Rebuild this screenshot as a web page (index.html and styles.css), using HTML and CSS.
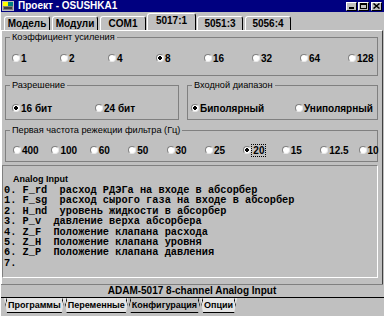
FILE: index.html
```html
<!DOCTYPE html>
<html lang="ru">
<head>
<meta charset="utf-8">
<title>Проект - OSUSHKA1</title>
<link rel="stylesheet" href="styles.css">
</head>
<body>
<div class="window">
  <div class="titlebar">
    <svg class="appicon" width="12" height="10" viewBox="0 0 12 10">
      <rect x="0" y="0" width="12" height="10" fill="#c0c0c0"/>
      <rect x="1" y="1" width="5" height="4" fill="#ffff00"/>
      <rect x="6" y="1" width="5" height="4" fill="#008080"/>
      <rect x="1" y="5" width="10" height="4" fill="#808080"/>
      <path d="M2 7h8" stroke="#000" stroke-width="1"/>
    </svg>
    <span class="title">Проект - OSUSHKA1</span>
    <div class="tbtns">
      <div class="tbtn"><svg width="7" height="6" viewBox="0 0 7 6"><rect x="1" y="4" width="5" height="2" fill="#000"/></svg></div>
      <div class="tbtn"><svg width="7" height="6" viewBox="0 0 7 6"><rect x="0.5" y="0.5" width="6" height="5" fill="none" stroke="#000"/><rect x="0" y="0" width="7" height="2" fill="#000"/></svg></div>
      <div class="tbtn close"><svg width="7" height="6" viewBox="0 0 7 6"><path d="M0.5 0.5L6.5 5.5M6.5 0.5L0.5 5.5" stroke="#000" stroke-width="1.5"/></svg></div>
    </div>
  </div>

  <div class="tabs">
    <div class="tab">Модель</div>
    <div class="tab">Модули</div>
    <div class="tab">COM1</div>
    <div class="tab active">5017:1</div>
    <div class="tab">5051:3</div>
    <div class="tab">5056:4</div>
  </div>

  <div class="panel">
    <fieldset class="group g-gain">
      <legend>Коэффициент усиления</legend>
      <div class="radios gain">
        <label class="radio"><span class="dot"></span>1</label>
        <label class="radio"><span class="dot"></span>2</label>
        <label class="radio"><span class="dot"></span>4</label>
        <label class="radio"><span class="dot on"></span>8</label>
        <label class="radio"><span class="dot"></span>16</label>
        <label class="radio"><span class="dot"></span>32</label>
        <label class="radio"><span class="dot"></span>64</label>
        <label class="radio"><span class="dot"></span>128</label>
      </div>
    </fieldset>

    <div class="pair">
      <fieldset class="group g-res">
        <legend>Разрешение</legend>
        <div class="radios res">
          <label class="radio"><span class="dot on"></span>16 бит</label>
          <label class="radio"><span class="dot"></span>24 бит</label>
        </div>
      </fieldset>
      <fieldset class="group g-range">
        <legend>Входной диапазон</legend>
        <div class="radios range">
          <label class="radio"><span class="dot on"></span>Биполярный</label>
          <label class="radio"><span class="dot"></span>Униполярный</label>
        </div>
      </fieldset>
    </div>

    <fieldset class="group g-freq">
      <legend>Первая частота режекции фильтра (Гц)</legend>
      <div class="radios freq">
        <label class="radio"><span class="dot"></span>400</label>
        <label class="radio"><span class="dot"></span>100</label>
        <label class="radio"><span class="dot"></span>60</label>
        <label class="radio"><span class="dot"></span>50</label>
        <label class="radio"><span class="dot"></span>30</label>
        <label class="radio"><span class="dot"></span>25</label>
        <label class="radio"><span class="dot on"></span><span class="focus">20</span></label>
        <label class="radio"><span class="dot"></span>15</label>
        <label class="radio"><span class="dot"></span>12.5</label>
        <label class="radio"><span class="dot"></span>10</label>
      </div>
    </fieldset>

    <div class="memo">
      <div class="memo-title">Analog Input</div>
<pre class="memo-text">0. F_rd  расход РДЭГа на входе в абсорбер
1. F_sg  расход сырого газа на входе в абсорбер
2. H_nd  уровень жидкости в абсорбер
3. P_v  давление верха абсорбера
4. Z_F  Положение клапана расхода
5. Z_H  Положение клапана уровня
6. Z_P  Положение клапана давления
7.</pre>
    </div>
  </div>

  <div class="status">ADAM-5017 8-channel Analog Input</div>

  <div class="sheets">
    <div class="sheet">Программы</div>
    <div class="sheet">Переменные</div>
    <div class="sheet active">Конфигурация</div>
    <div class="sheet">Опции</div>
  </div>
</div>
</body>
</html>
```

FILE: styles.css
```css
* { box-sizing: border-box; }

body {
  margin: 0;
  width: 384px;
  height: 316px;
  overflow: hidden;
  background: #c0c0c0;
  font-family: "Liberation Sans", Arial, sans-serif;
  font-size: 10px;
  color: #000;
}

.window {
  width: 384px;
  height: 316px;
  display: flex;
  flex-direction: column;
  background: #c0c0c0;
  border-left: 1px solid #fff;
}

/* title bar */
.titlebar {
  height: 12px;
  flex: none;
  background: #000080;
  color: #fff;
  display: flex;
  align-items: center;
  gap: 4px;
  padding: 0 2px 0 1px;
  font-weight: bold;
  font-size: 10px;
  line-height: 12px;
}
.appicon { flex: none; }
.title { flex: 1; }
.tbtns { display: flex; gap: 1px; }
.tbtn {
  width: 11px;
  height: 9px;
  background: #c0c0c0;
  border: 1px solid;
  border-color: #fff #000 #000 #fff;
  display: flex;
  align-items: center;
  justify-content: center;
}
.tbtn.close { margin-left: 1px; }

/* top tabs */
.tabs {
  height: 18px;
  flex: none;
  display: flex;
  align-items: flex-end;
  padding-left: 3px;
  gap: 2px;
}
.tab {
  width: 46px;
  height: 14px;
  border: 1px solid;
  border-color: #fff #000 transparent #fff;
  border-bottom: none;
  border-radius: 3px 3px 0 0;
  text-align: center;
  font-weight: bold;
  line-height: 13px;
}
.tab.active {
  height: 17px;
  width: 49px;
  margin: 0 -1px 0 -1px;
  line-height: 14px;
}

/* main page */
.panel {
  flex: none;
  height: 254px;
  margin-right: 1px;
  border-top: 1px solid #fff;
  border-left: 1px solid #fff;
  border-right: 1px solid #404040;
  padding: 0 4px 0 3px;
  display: flex;
  flex-direction: column;
}

.group {
  margin: 0;
  border: 1px solid #808080;
  padding: 0;
  min-width: 0;
}
.group legend {
  padding: 0 2px;
  margin-left: 4px;
  font-size: 9.2px;
  line-height: 12px;
}

.g-gain { height: 45px; }
.pair {
  display: flex;
  gap: 8px;
  margin-top: 3px;
}
.g-res { width: 174px; height: 41px; }
.g-range { flex: 1; height: 41px; }
.g-freq { height: 38px; margin-top: 4px; }

.radios {
  display: grid;
  height: 12px;
  align-items: center;
}
.gain {
  grid-template-columns: repeat(8, 48px);
  margin: 9px 0 0 6px;
}
.res {
  grid-template-columns: 83px 80px;
  margin: 11px 0 0 6px;
}
.range {
  grid-template-columns: 104px 90px;
  margin: 11px 0 0 3px;
}
.freq {
  grid-template-columns: repeat(10, 38.4px);
  margin: 8px 0 0 7px;
}

.radio {
  display: flex;
  align-items: center;
  gap: 1px;
  font-weight: bold;
  font-size: 10px;
  white-space: nowrap;
}
.dot {
  width: 8px;
  height: 8px;
  border-radius: 50%;
  background: #fff;
  border: 1px solid;
  border-color: #808080 #e8e8e8 #e8e8e8 #808080;
  flex: none;
}
.dot.on {
  background: radial-gradient(circle, #000 0 1.6px, #fff 2.1px);
}
.focus {
  outline: 1px dotted #000;
  outline-offset: 0;
  padding: 0 1px;
}

.memo {
  margin: 3px 0 0 -3px;
  height: 113px;
  border: 1px solid;
  border-color: #808080 #fff #fff #808080;
  padding: 7px 0 0 1px;
}
.memo-title {
  font-weight: bold;
  font-size: 9px;
  line-height: 12px;
  padding-left: 9px;
}
.memo-text {
  margin: 0;
  font-family: "Liberation Mono", "Courier New", monospace;
  font-weight: bold;
  font-size: 10.3px;
  line-height: 10.4px;
}

/* status */
.status {
  flex: none;
  height: 13px;
  margin-right: 1px;
  border-top: 1px solid #808080;
  text-align: center;
  font-weight: bold;
  font-size: 10px;
  line-height: 11px;
}

/* sheet tabs */
.sheets {
  flex: none;
  height: 17px;
  display: flex;
  padding-left: 3px;
  border-top: 1px solid #000;
}
.sheet {
  height: 15px;
  padding: 0 4px;
  margin-right: -1px;
  font-weight: bold;
  font-size: 9px;
  line-height: 14px;
  background: #e4e4e4;
  border-bottom: 1px solid #000;
  clip-path: polygon(0 0, 100% 0, calc(100% - 3px) 100%, 3px 100%);
  background-image:
    linear-gradient(to bottom right, transparent calc(50% - 0.6px), #000 50%, transparent calc(50% + 0.6px)),
    linear-gradient(to bottom left, transparent calc(50% - 0.6px), #000 50%, transparent calc(50% + 0.6px));
  background-size: 3px 100%, 3px 100%;
  background-position: left top, right top;
  background-repeat: no-repeat;
}
.sheet.active { background-color: #c0c0c0; }
```
